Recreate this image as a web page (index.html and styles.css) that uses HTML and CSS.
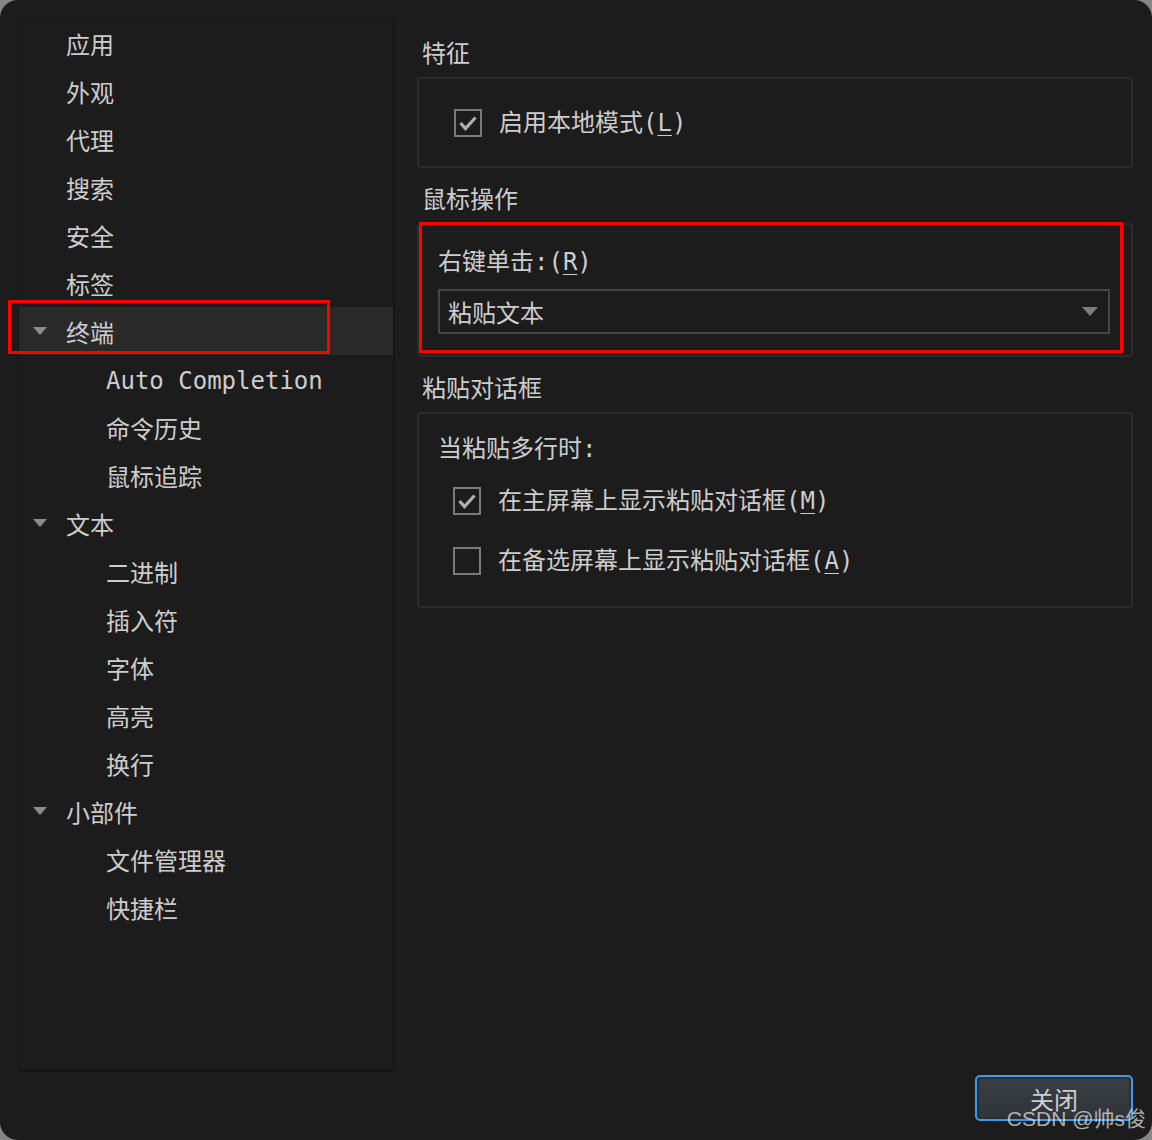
FILE: index.html
```html
<!DOCTYPE html>
<html lang="zh-CN">
<head>
<meta charset="UTF-8">
<title>设置</title>
<link rel="stylesheet" href="styles.css">
</head>
<body>

<div class="window">
  <div class="main">

    <!-- 左侧导航树 -->
    <div class="tree">
      <div class="row"><span class="twist"></span>应用</div>
      <div class="row"><span class="twist"></span>外观</div>
      <div class="row"><span class="twist"></span>代理</div>
      <div class="row"><span class="twist"></span>搜索</div>
      <div class="row"><span class="twist"></span>安全</div>
      <div class="row"><span class="twist"></span>标签</div>
      <div class="row selected"><span class="twist open"></span>终端<div class="mark mark-tree"></div></div>
      <div class="row child latin"><span class="twist"></span>Auto Completion</div>
      <div class="row child"><span class="twist"></span>命令历史</div>
      <div class="row child"><span class="twist"></span>鼠标追踪</div>
      <div class="row"><span class="twist open"></span>文本</div>
      <div class="row child"><span class="twist"></span>二进制</div>
      <div class="row child"><span class="twist"></span>插入符</div>
      <div class="row child"><span class="twist"></span>字体</div>
      <div class="row child"><span class="twist"></span>高亮</div>
      <div class="row child"><span class="twist"></span>换行</div>
      <div class="row"><span class="twist open"></span>小部件</div>
      <div class="row child"><span class="twist"></span>文件管理器</div>
      <div class="row child"><span class="twist"></span>快捷栏</div>
    </div>

    <!-- 右侧设置 -->
    <div class="panel">
      <div class="caption">特征</div>
      <div class="group group-feature">
        <div class="check">
          <span class="box"><svg viewBox="0 0 28 28" width="28" height="28"><path d="M6.5 14l5 5.5L21.5 8.5" fill="none" stroke="#b0b0b0" stroke-width="3.2"/></svg></span>
          <span class="label">启用本地模式(<u>L</u>)</span>
        </div>
      </div>

      <div class="caption">鼠标操作</div>
      <div class="group group-mouse">
        <div class="line">右键单击:(<u>R</u>)</div>
        <div class="combo">
          <span>粘贴文本</span>
          <span class="arrow"></span>
        </div>
        <div class="mark mark-mouse"></div>
      </div>

      <div class="caption">粘贴对话框</div>
      <div class="group group-paste">
        <div class="line">当粘贴多行时:</div>
        <div class="check check-row">
          <span class="box"><svg viewBox="0 0 28 28" width="28" height="28"><path d="M6.5 14l5 5.5L21.5 8.5" fill="none" stroke="#b0b0b0" stroke-width="3.2"/></svg></span>
          <span class="label">在主屏幕上显示粘贴对话框(<u>M</u>)</span>
        </div>
        <div class="check check-row">
          <span class="box"></span>
          <span class="label">在备选屏幕上显示粘贴对话框(<u>A</u>)</span>
        </div>
      </div>
    </div>

  </div>

  <div class="footer">
    <button class="close">关闭</button>
  </div>

  <div class="watermark">CSDN @帅s俊</div>
</div>

</body>
</html>
```

FILE: styles.css
```css
body {
  margin: 0;
  background: #868686;
  font-family: "DejaVu Sans Mono", "Noto Sans CJK SC", monospace;
  font-size: 24px;
  color: #cdcdcd;
}

.window {
  position: relative;
  height: 1140px;
  box-sizing: border-box;
  background: #1c1c1c;
  border-radius: 18px;
  padding: 18px 19px 0 18px;
}

.main {
  display: flex;
  gap: 22px;
  height: 1054px;
}

/* 导航树 */
.tree {
  width: 377px;
  box-sizing: border-box;
  border: 2px solid #151515;
  border-width: 1px 2px 2px 1px;
}

.row {
  position: relative;
  display: flex;
  align-items: center;
  height: 48px;
  padding-left: 14px;
  white-space: nowrap;
}

.row.child {
  padding-left: 54px;
}

.row.latin {
  padding-top: 4px;
  box-sizing: border-box;
}

.row.selected {
  background: #292929;
}

.twist {
  width: 14px;
  height: 8px;
  margin-right: 19px;
  flex: none;
}

.twist.open {
  width: 0;
  height: 0;
  border-left: 7px solid transparent;
  border-right: 7px solid transparent;
  border-top: 8px solid #8c8c8c;
}

/* 右侧 */
.panel {
  flex: 1;
  padding-top: 22px;
}

.caption {
  height: 28px;
  line-height: 28px;
  padding-left: 5px;
  margin-bottom: 9px;
}

.group {
  position: relative;
  border: 2px solid #2b2b2b;
  border-radius: 4px;
  margin-bottom: 18px;
}

.group-feature {
  padding: 30px 20px 29px 35px;
}

.group-mouse {
  padding: 23px 21px 21px 19px;
}

.group-paste {
  padding: 21px 20px 15px 19px;
}

.line {
  height: 28px;
  line-height: 28px;
}

.check {
  display: flex;
  align-items: center;
  height: 28px;
}

.check-row {
  height: 60px;
  padding-left: 15px;
}

.group-paste .line {
  margin-bottom: 8px;
}

.label {
  white-space: nowrap;
  line-height: 28px;
}

.box {
  width: 24px;
  height: 24px;
  border: 2px solid #7a7a7a;
  margin-right: 17px;
  flex: none;
  position: relative;
}

.box svg {
  position: absolute;
  left: -2px;
  top: -2px;
}

u {
  text-decoration-thickness: 1px;
  text-underline-offset: 4px;
}

.combo {
  display: flex;
  align-items: center;
  justify-content: space-between;
  height: 45px;
  box-sizing: border-box;
  margin-top: 13px;
  border: 2px solid #454545;
  padding: 0 10px 0 8px;
}

.arrow {
  width: 0;
  height: 0;
  border-left: 8px solid transparent;
  border-right: 8px solid transparent;
  border-top: 9px solid #7c7c7c;
}

/* 红色标注框 */
.mark {
  position: absolute;
  border: 3px solid #ff0000;
  pointer-events: none;
}

.mark-tree {
  left: -11px;
  top: -7px;
  width: 316px;
  height: 48px;
}

.mark-mouse {
  left: 0;
  top: -3px;
  width: 698px;
  height: 125px;
}

/* 底部 */
.footer {
  display: flex;
  justify-content: flex-end;
  padding-top: 3px;
}

.close {
  width: 158px;
  height: 46px;
  border: 2px solid #3c9be6;
  border-radius: 5px;
  background: linear-gradient(#3a3e45, #2f333a);
  box-shadow: inset 0 0 0 2px #2a2d33;
  color: #cfcfcf;
  font-family: "Noto Sans CJK SC", sans-serif;
  font-size: 24px;
  padding: 0;
}

.watermark {
  position: absolute;
  right: 6px;
  bottom: 8px;
  font-family: "Liberation Sans", "Noto Sans CJK SC", sans-serif;
  font-size: 21px;
  color: rgba(230, 230, 230, 0.72);
  pointer-events: none;
}
```
